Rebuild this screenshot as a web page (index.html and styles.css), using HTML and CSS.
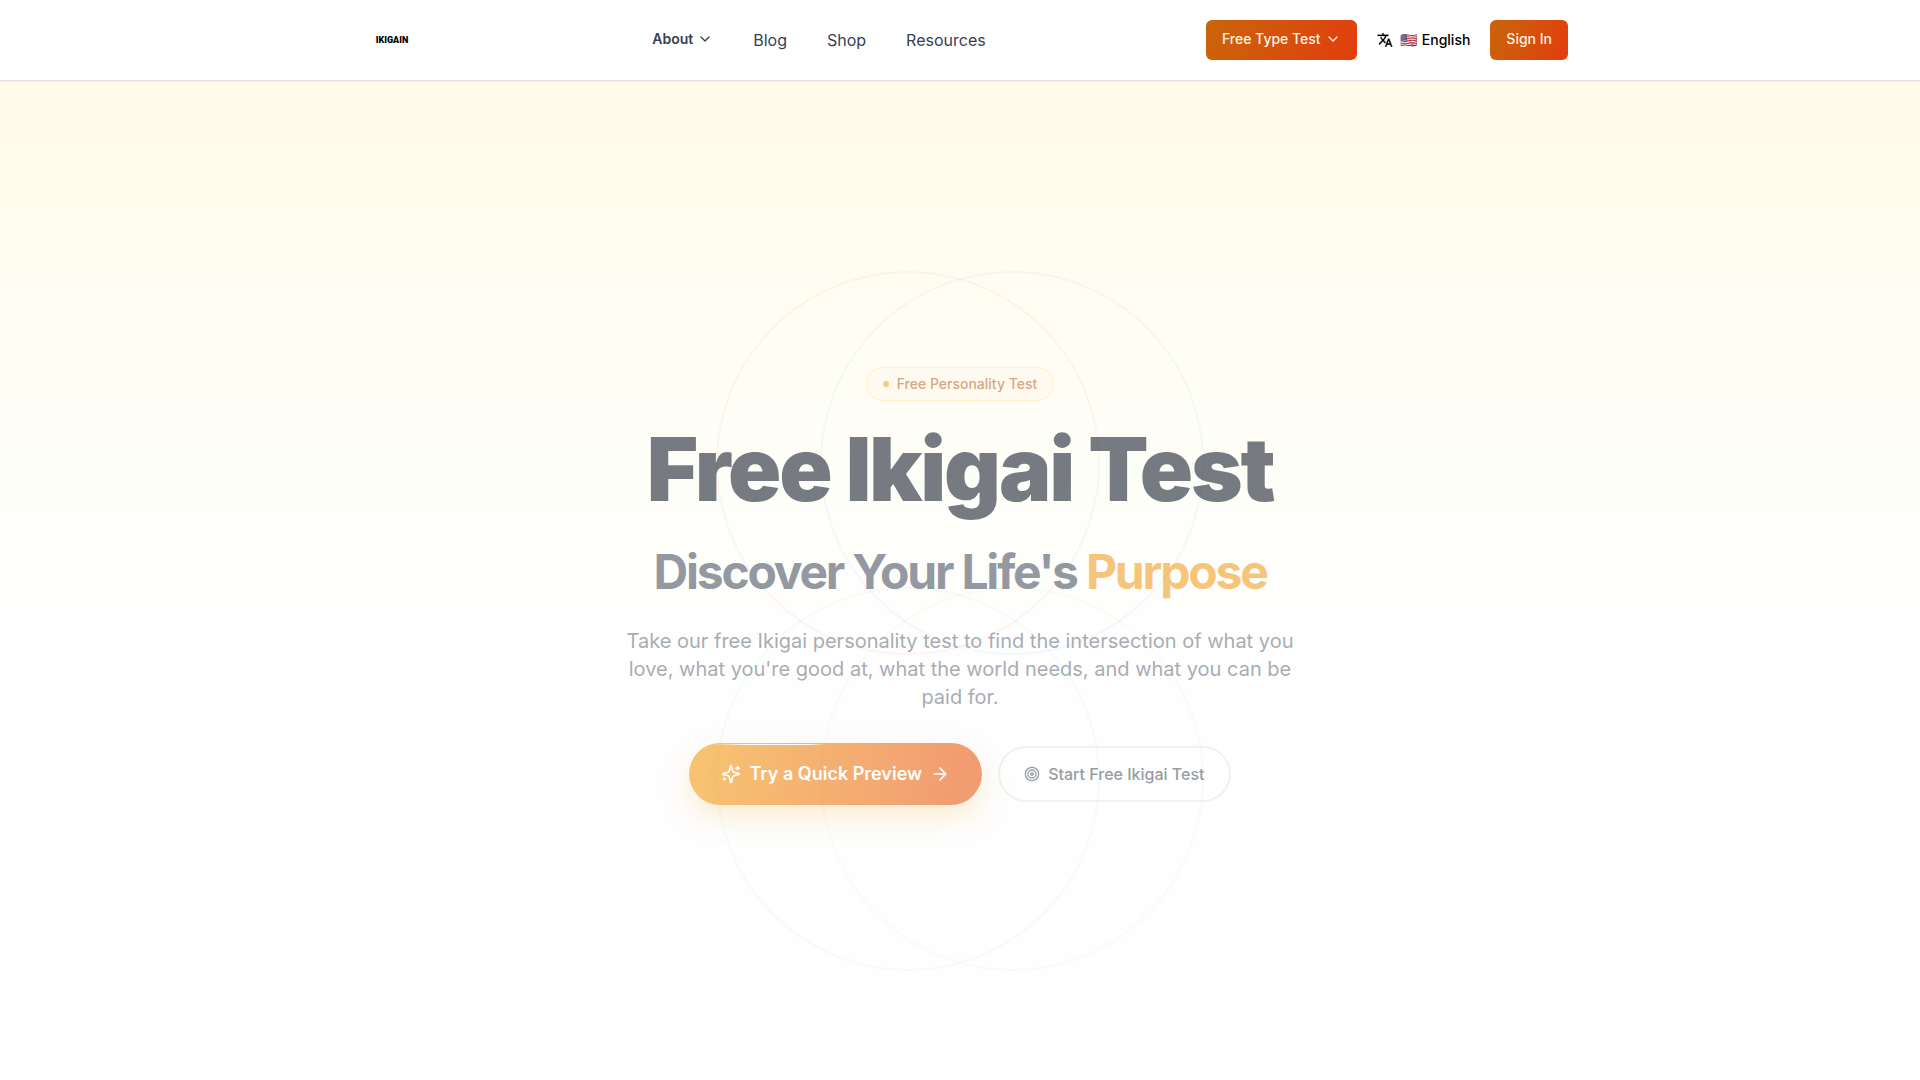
FILE: index.html
```html
<!DOCTYPE html>
<html lang="en">
<head>
    <meta charset="UTF-8">
    <meta name="viewport" content="width=device-width, initial-scale=1.0">
    <title>Free Ikigai Test</title>
    <link rel="stylesheet" href="styles.css">
</head>
<body>

<header class="site-header">
    <div class="header-inner">
        <a href="#" class="logo">IKIGAIN</a>

        <nav class="main-nav">
            <button type="button" class="nav-button">
                About
                <svg class="icon" viewBox="0 0 24 24"><path d="m6 9 6 6 6-6"/></svg>
            </button>
            <a href="#">Blog</a>
            <a href="#">Shop</a>
            <a href="#">Resources</a>
        </nav>

        <div class="header-actions">
            <button type="button" class="button">
                Free Type Test
                <svg class="icon" viewBox="0 0 24 24"><path d="m6 9 6 6 6-6"/></svg>
            </button>
            <button type="button" class="language">
                <svg class="icon-translate" viewBox="0 0 24 24"><path d="m12.87 15.07-2.54-2.51.03-.03A17.52 17.52 0 0 0 14.07 6H17V4h-7V2H8v2H1v2h11.17C11.5 7.92 10.44 9.75 9 11.35 8.07 10.32 7.3 9.19 6.69 8h-2c.73 1.63 1.73 3.17 2.98 4.56l-5.09 5.02L4 19l5-5 3.11 3.11.76-2.04zM18.5 10h-2L12 22h2l1.12-3h4.75L21 22h2l-4.5-12zm-2.62 7 1.62-4.33L19.12 17h-3.24z"/></svg>
                <span>🇺🇸 English</span>
            </button>
            <button type="button" class="button">Sign In</button>
        </div>
    </div>
</header>

<main class="hero">
    <!-- Four overlapping ikigai circles -->
    <div class="circles">
        <span class="circle love"></span>
        <span class="circle skill"></span>
        <span class="circle world"></span>
        <span class="circle paid"></span>
    </div>

    <div class="hero-content">
        <p class="badge"><span class="dot"></span>Free Personality Test</p>
        <h1>Free Ikigai Test</h1>
        <h2>Discover Your Life's <span class="highlight">Purpose</span></h2>
        <p class="intro">Take our free Ikigai personality test to find the intersection of what you love, what you're good at, what the world needs, and what you can be paid for.</p>
        <div class="hero-buttons">
            <a href="#" class="cta">
                <svg class="icon" viewBox="0 0 24 24"><path d="M9.937 15.5A2 2 0 0 0 8.5 14.063l-6.135-1.582a.5.5 0 0 1 0-.962L8.5 9.936A2 2 0 0 0 9.937 8.5l1.582-6.135a.5.5 0 0 1 .963 0L14.063 8.5A2 2 0 0 0 15.5 9.937l6.135 1.581a.5.5 0 0 1 0 .964L15.5 14.063a2 2 0 0 0-1.437 1.437l-1.582 6.135a.5.5 0 0 1-.963 0z"/><path d="M20 3v4M22 5h-4M4 17v2M5 18H3"/></svg>
                Try a Quick Preview
                <svg class="icon" viewBox="0 0 24 24"><path d="M5 12h14M12 5l7 7-7 7"/></svg>
            </a>
            <a href="#" class="cta-outline">
                <svg class="icon" viewBox="0 0 24 24"><circle cx="12" cy="12" r="10"/><circle cx="12" cy="12" r="6"/><circle cx="12" cy="12" r="2"/></svg>
                Start Free Ikigai Test
            </a>
        </div>
    </div>
</main>

</body>
</html>
```
FILE: styles.css
```css
* {
    box-sizing: border-box;
}
body {
    margin: 0;
    font-family: Inter, "Noto Color Emoji", sans-serif;
    font-size: 16px;
    line-height: 24px;
    color: #374151;
    background-color: #fefefe;
}
a {
    color: inherit;
    text-decoration: none;
}
button {
    font-family: inherit;
    font-size: 14px;
    font-weight: 500;
    line-height: 20px;
    border: none;
    cursor: pointer;
}
h1, h2, p {
    margin: 0;
}
.icon {
    width: 16px;
    height: 16px;
    flex: none;
    fill: none;
    stroke: currentColor;
    stroke-width: 2;
    stroke-linecap: round;
    stroke-linejoin: round;
}

/* Header */
.site-header {
    position: sticky;
    top: 0;
    z-index: 10;
    background-color: #fff;
    border-bottom: 1px solid #e0e0e0;
    box-shadow: 0 1px 2px rgba(0, 0, 0, 0.06);
}
.header-inner {
    display: flex;
    align-items: center;
    justify-content: space-between;
    max-width: 1280px;
    height: 80px;
    margin: 0 auto;
    padding: 0 32px;
}
.logo {
    width: 80px;
    text-align: center;
    font-family: "Liberation Sans Narrow", "Roboto", sans-serif;
    font-size: 9px;
    font-weight: 900;
    color: #000;
}
.main-nav {
    display: flex;
    align-items: center;
    gap: 40px;
}
.nav-button {
    display: flex;
    align-items: center;
    gap: 4px;
    padding: 0 0 2px;
    font-weight: 600;
    color: #374151;
    background: none;
}
.header-actions {
    display: flex;
    align-items: center;
    gap: 20px;
}
.button {
    display: flex;
    align-items: center;
    gap: 4px;
    height: 40px;
    padding: 0 16px 2px;
    color: #fff3e0;
    background: linear-gradient(110deg, #ca6509, #e23d0e);
    border-radius: 6px;
}
.language {
    display: flex;
    align-items: center;
    gap: 8px;
    padding: 0;
    color: #000;
    background: none;
}
.icon-translate {
    width: 16px;
    height: 16px;
    fill: currentColor;
    stroke: currentColor;
    stroke-width: 0.4;
}

/* Hero */
.hero {
    position: relative;
    display: flex;
    align-items: center;
    justify-content: center;
    min-height: 100vh;
    overflow: hidden;
    background: linear-gradient(to bottom, #fffbea, #fffef4 25%, #fefefe 50%);
}
.circles {
    position: absolute;
    top: 50%;
    left: 50%;
    width: 488px;
    height: 700px;
    transform: translate(-50%, -50%);
}
.circle {
    position: absolute;
    width: 384px;
    height: 384px;
    border: 2px solid;
    border-radius: 50%;
    opacity: 0.05;
}
.love {
    top: 0;
    left: 0;
    border-color: #ff4040;
}
.skill {
    top: 0;
    right: 0;
    border-color: #4f7dff;
}
.world {
    bottom: 0;
    left: 0;
    border-color: #20d090;
}
.paid {
    bottom: 0;
    right: 0;
    border-color: #ffb820;
}
.hero-content {
    position: relative;
    display: flex;
    flex-direction: column;
    align-items: center;
    padding: 0 24px 70px;
    text-align: center;
}
.badge {
    display: flex;
    align-items: center;
    gap: 8px;
    padding: 6px 16px;
    font-size: 14px;
    font-weight: 500;
    line-height: 20px;
    color: #d6a783;
    background-color: #fffaef;
    border: 1px solid #fef2c8;
    border-radius: 999px;
}
.dot {
    width: 6px;
    height: 6px;
    background-color: #f8cb82;
    border-radius: 50%;
}
h1 {
    margin-top: 24px;
    font-size: 88px;
    font-weight: 900;
    line-height: 88px;
    letter-spacing: -0.025em;
    color: #111827;
    opacity: 0.57;
}
h2 {
    margin-top: 28px;
    font-size: 48px;
    font-weight: 700;
    line-height: 62px;
    letter-spacing: -0.046em;
    color: #374151;
    opacity: 0.53;
}
.highlight {
    color: #f09306;
}
.intro {
    max-width: 672px;
    margin-top: 24px;
    font-size: 20px;
    line-height: 28px;
    color: #4b5563;
    opacity: 0.48;
}
.hero-buttons {
    display: flex;
    align-items: center;
    gap: 16px;
    margin-top: 32px;
}
.cta,
.cta-outline {
    display: flex;
    align-items: center;
    gap: 8px;
    border-radius: 999px;
}
.cta {
    position: relative;
    height: 62px;
    padding: 0 32px;
    font-size: 18px;
    font-weight: 600;
    color: #fff;
    background: linear-gradient(100deg, #f39c0c, #ea580c 90%);
    box-shadow: 0 12px 28px -2px rgba(245, 158, 11, 0.35);
    opacity: 0.58;
}
.cta .icon {
    width: 20px;
    height: 20px;
}
/* Shine along the top edge */
.cta::before {
    content: "";
    position: absolute;
    top: 1px;
    left: 24px;
    width: 112px;
    height: 1px;
    background: linear-gradient(to right, transparent, #fff 30%, #fff 85%, transparent);
}
.cta-outline {
    height: 56px;
    padding: 0 24px;
    font-weight: 500;
    color: #979ca4;
    border: 2px solid #f0f1f2;
}
```
